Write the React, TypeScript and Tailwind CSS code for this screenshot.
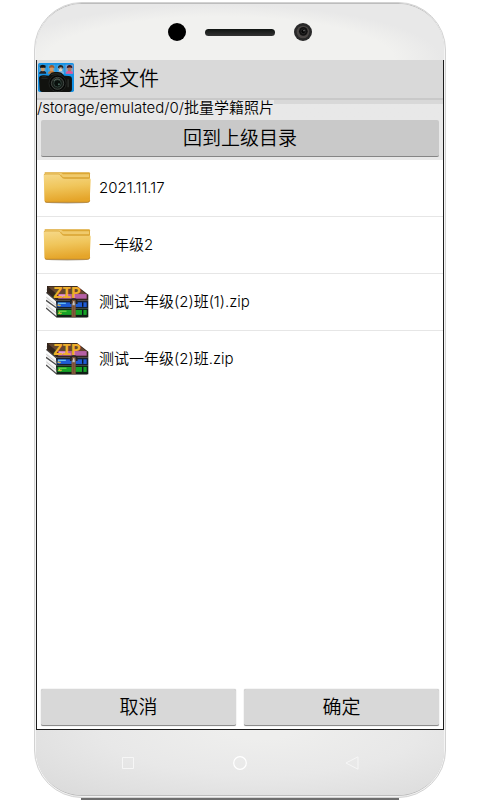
import { useState } from "react";
import clsx from "clsx";

type Entry = {
  name: string;
  kind: "folder" | "zip";
};

const entries: Entry[] = [
  { name: "2021.11.17", kind: "folder" },
  { name: "一年级2", kind: "folder" },
  { name: "测试一年级(2)班(1).zip", kind: "zip" },
  { name: "测试一年级(2)班.zip", kind: "zip" },
];

function AppIcon() {
  const hair = ["#15151a", "#9a5a30", "#2a2320", "#3a1720"];
  const skin = ["#c99a6a", "#d79862", "#e3d3bd", "#b5765a"];
  const shirt = ["#1d2430", "#c07a3c", "#7fb4dd", "#e2549a"];

  return (
    <svg viewBox="0 0 105 87" className="h-[29px] w-9 shrink-0" preserveAspectRatio="none" aria-hidden="true">
      <rect width="105" height="87" rx="5" fill="#1492e6" />
      {[0, 1, 2, 3].map((i) => (
        <g key={i} transform={`translate(${2 + i * 26} 5)`}>
          <rect width="23" height="27" fill={i === 3 ? "#7a9fd0" : "#3ea3e2"} />
          <path d="M1 27c1-7 5-9 11-9s10 2 10 9z" fill={shirt[i]} />
          <ellipse cx="12" cy="12" rx="6" ry="8" fill={skin[i]} />
          <path d="M4 11c0-7 3-10 8-10s9 3 8 10c-3-3-12-4-16 0z" fill={hair[i]} />
          {i === 0 && <path d="M1 4 12 0l11 4-11 5z" fill="#111" />}
          {i === 2 && <path d="M6 12h5m3 0h5" stroke="#44506a" strokeWidth="2" />}
        </g>
      ))}
      <path
        d="M3 44c2-6 8-8 15-7l13 1 8-9c3-3 26-3 29 0l9 9 12 1c7 0 10 3 10 9v31c0 5-3 8-8 8H12c-4 0-7-3-7-8z"
        fill="#11120f"
      />
      <path d="M38 35c8-4 22-4 30 0" stroke="#2b2f2b" strokeWidth="3" fill="none" />
      <path d="M10 46h18M12 40h12" stroke="#282c28" strokeWidth="3" />
      <circle cx="57" cy="61" r="25" fill="#070807" stroke="#2b302c" strokeWidth="2" />
      <circle cx="57" cy="61" r="18" fill="#171d19" stroke="#59615b" strokeWidth="2" />
      <circle cx="57" cy="61" r="11" fill="#090f0c" stroke="#3f554c" strokeWidth="2" />
      <path d="M46 54c4-7 13-8 18-3" stroke="#7d8b82" strokeWidth="2" fill="none" />
      <circle cx="61" cy="64" r="3" fill="#486459" />
      <path d="M88 49v24" stroke="#262a26" strokeWidth="5" />
    </svg>
  );
}

function FolderIcon() {
  return (
    <svg viewBox="0 0 144 96" className="h-8 w-12" aria-hidden="true">
      <defs>
        <linearGradient id="folderFront" x1="0" y1="0" x2="0.15" y2="1">
          <stop offset="0" stopColor="#f6d98a" />
          <stop offset="0.5" stopColor="#f0c65c" />
          <stop offset="1" stopColor="#e5a52a" />
        </linearGradient>
      </defs>
      <ellipse cx="73" cy="91" rx="66" ry="4" fill="#c9c5bd" />
      <path d="M5 1h133c2 0 3 1 3 3v84H5z" fill="#dda835" />
      <path d="M7 3h48l5 4h78v9H60l-6-7H7z" fill="#f0ca6c" />
      <path d="M2 9c0-2 2-4 5-4h39c3 0 5 1 7 4l4 6c2 3 4 4 8 4h73c4 0 5 2 5 5l-3 62c0 2-2 4-5 4H9c-3 0-4-2-4-4z" fill="url(#folderFront)" />
      <path d="M4 9c0-2 2-3 4-3h37c4 0 6 2 8 5 3 5 6 8 13 8h73" stroke="#d39a26" strokeWidth="2" fill="none" />
      <path d="M6 89c2 2 4 2 6 2h121c4 0 6-2 7-5" stroke="#b37717" strokeWidth="2.5" fill="none" />
    </svg>
  );
}

function ZipIcon() {
  return (
    <svg viewBox="30 30 130 102" className="mx-auto h-[34px] w-[43px]" aria-hidden="true">
      {/* page edges on the left side of each volume */}
      <path d="M32 38 60 61v14L32 51zM31 61l31 23v14L31 75zM31 84l31 22v19L31 98z" fill="#f2f2f2" />
      <path d="M31 44 59 68M31 67l30 24M31 90l31 25" stroke="#b4b4b4" strokeWidth="2" />
      <path d="M31 52 61 77M30 76l32 23M30 99l32 27h93" stroke="#4c4c4c" strokeWidth="4" fill="none" />
      <path d="M33 33h91l34 26v18H63L33 53z" fill="#33251c" />
      <path d="M36 35h86l32 23H64z" fill="#65452f" />
      <path d="M67 57h86v14H67z" fill="#b660a6" />
      <path d="M69 58h27l-8 8H69z" fill="#e29ad0" />
      <path d="M60 77h98v23H62z" fill="#16202e" />
      <path d="M65 82h88v14H65z" fill="#1e5bd4" />
      <path d="M66 83h24v4H66z" fill="#65bdf2" />
      <path d="M60 100h98v27H62z" fill="#112016" />
      <path d="M65 105h88v15H65z" fill="#16a326" />
      <path d="M68 107h24v4H68z" fill="#6ccc48" />
      <path d="M65 91h10m-8-3 4 6M66 115h12m-8-4 3 7" stroke="#e8bc3c" strokeWidth="3" />
      <path d="M107 71h13v56h-13z" fill="#785036" />
      <path d="M110 91v33m6-33v33" stroke="#8c6040" strokeWidth="2" />
      <path d="M105 87V79c0-5 4-7 9-7s9 3 9 7v8" stroke="#242424" strokeWidth="5" fill="none" />
      <path d="M109 85h9v6h-9z" fill="#9c9c9c" />
      <path d="M112 79h4v10h-4z" fill="#d0d0d0" />
      <path d="M141 82v13m0 10v15" stroke="#0c1320" strokeWidth="4" />
      <text y="70" fill="#efae2a" fontSize="50" fontWeight="700" className="font-['Liberation_Mono',monospace]">
        <tspan x="51">Z</tspan>
        <tspan x="78">I</tspan>
        <tspan x="106">P</tspan>
      </text>
    </svg>
  );
}

function PhoneTop() {
  return (
    <div className="flex h-14 items-center justify-center gap-[19px] bg-radial-[at_45%_100%] from-[#f1f1ef] from-55% to-[#e8e8e8] to-70%">
      <span className="size-[18px] rounded-full bg-black" />
      <span className="h-[7px] w-[70px] rounded-full bg-linear-to-b from-[#101412] to-[#333]" />
      <svg viewBox="0 0 54 54" className="size-[18px]" aria-hidden="true">
        <circle cx="27" cy="27" r="27" fill="#292929" />
        <circle cx="27" cy="27" r="19" fill="#4a4644" />
        <circle cx="28" cy="25" r="13" fill="#111" />
        <circle cx="28" cy="25" r="7" fill="#050505" stroke="#333" strokeWidth="2" />
        <circle cx="30" cy="23" r="2" fill="#999" />
      </svg>
    </div>
  );
}

function PhoneNav() {
  return (
    <nav className="flex h-[65px] items-center justify-center gap-[98px] bg-radial-[at_55%_0%] from-[#eeeeed] from-10% via-[#e8e8e8] via-50% to-[#d9d9d9]">
      <button type="button" aria-label="Recent apps">
        <svg viewBox="0 0 14 14" className="size-3.5" fill="none" stroke="#f6f6f6">
          <path d="M1.5 1.5h11v11h-11z" />
        </svg>
      </button>
      <button type="button" aria-label="Home">
        <svg viewBox="0 0 14 14" className="size-3.5" fill="none" stroke="#fff" strokeWidth="1.2">
          <circle cx="7" cy="7" r="6.3" />
        </svg>
      </button>
      <button type="button" aria-label="Back">
        <svg viewBox="0 0 14 14" className="size-3.5" fill="none" stroke="#f6f6f6">
          <path d="M1 7 13 .8v12.4z" />
        </svg>
      </button>
    </nav>
  );
}

const actionClass =
  "h-[37px] flex-1 rounded-xs border-b border-[#8c8c8c] bg-[#d8d8d8] text-[19px] leading-none shadow-[0_0_1px_#999]";

export default function App() {
  const [selected, setSelected] = useState<string | null>(null);

  return (
    <main className="flex min-h-screen flex-col bg-white px-[34px] pt-0.5 font-['Inter','Noto_Sans_CJK_SC',sans-serif] font-[350] text-black">
      <div className="flex flex-1 flex-col overflow-hidden rounded-[48px] border border-[#d2d2d2] bg-[#f4f4f4] px-px pb-px">
        <div className="flex flex-1 flex-col overflow-hidden rounded-[46px] border-y border-[#bdbdbd] bg-[#e8e8e8]">
          <PhoneTop />

          <section className="flex flex-1 flex-col border-x border-b border-[#1c1c1c] bg-white">
            <header className="flex h-10 items-center gap-[5px] border-b-2 border-[#c9c9c9] bg-[#d9d9d9] pl-px">
              <div className="self-start pt-[3px]">
                <AppIcon />
              </div>
              <h1 className="text-xl leading-none font-[350]">选择文件</h1>
            </header>

            <div className="bg-[#e8e8e8] pb-[3px]">
              <div className="flex h-5 bg-linear-to-b from-[#d8d8d8] from-20% to-[#e8e8e8] to-20%">
                <p className="h-4 bg-[#e8e8e8] text-[15px] leading-4">/storage/emulated/0/批量学籍照片</p>
              </div>
              <div className="flex px-1">
                <button
                  type="button"
                  className="h-[37px] flex-1 rounded-xs border-b border-[#858585] bg-[#c9c9c9] text-[19px] leading-none"
                >
                  回到上级目录
                </button>
              </div>
            </div>

            <ul className="flex-1">
              {entries.map((entry) => (
                <li key={entry.name} className="border-b border-[#e6e6e6] last:border-b-0">
                  <button
                    type="button"
                    onClick={() => setSelected(entry.name)}
                    className={clsx(
                      "flex h-14 w-full items-center gap-2 pl-1.5 text-left text-[15px]",
                      selected === entry.name && "bg-[#efefef]"
                    )}
                  >
                    <span className="w-12 shrink-0">
                      {entry.kind === "folder" ? <FolderIcon /> : <ZipIcon />}
                    </span>
                    <span>{entry.name}</span>
                  </button>
                </li>
              ))}
            </ul>

            <footer className="flex gap-2 px-1 pb-[3px]">
              <button type="button" className={actionClass} onClick={() => setSelected(null)}>
                取消
              </button>
              <button type="button" className={actionClass}>
                确定
              </button>
            </footer>
          </section>

          <PhoneNav />
        </div>
      </div>
      <div className="mx-[47px] h-0.5 bg-[#6e6e6e]" />
    </main>
  );
}
